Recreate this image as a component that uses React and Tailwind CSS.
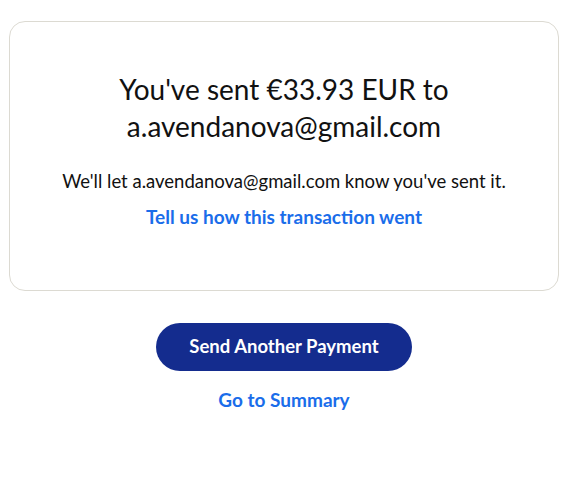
export default function App() {
  const email = 'a.avendanova@gmail.com';

  return (
    <div className="min-h-screen bg-white pr-[12px] pl-[9px] pt-[21px] font-['Lato','Open_Sans',sans-serif] text-[#111]">
      <div className="flex h-[270px] flex-col items-center rounded-[16px] border border-[#dcdad2] px-6 pt-[49px] text-center">
        <h1 className="text-[28px] leading-[37px] font-normal">
          You've sent €33.93 EUR to
          <br />
          {email}
        </h1>
        <p className="mt-[24px] text-[18.5px] leading-6">
          We'll let {email} know you've sent it.
        </p>
        <a href="#" className="mt-[12px] text-[19px] leading-6 font-bold text-[#1a6dea]">
          Tell us how this transaction went
        </a>
      </div>

      <div className="mt-[32px] flex flex-col items-center">
        <button
          type="button"
          className="h-[48px] w-[256px] rounded-full bg-[#142c8e] text-[18.5px] font-bold text-white"
        >
          Send Another Payment
        </button>
        <a href="#" className="mt-[17px] text-[19px] leading-6 font-bold text-[#1a6dea]">
          Go to Summary
        </a>
      </div>
    </div>
  );
}
